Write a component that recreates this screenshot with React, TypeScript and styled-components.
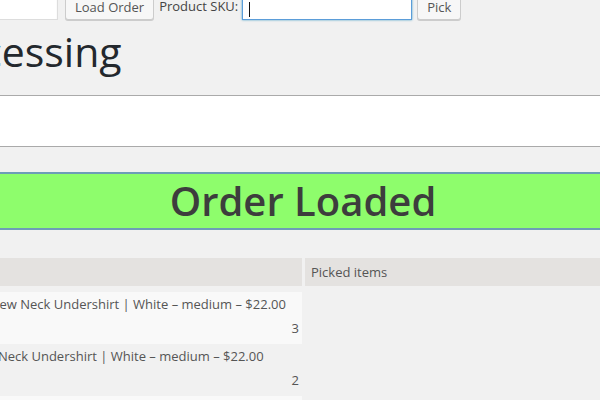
import styled, { createGlobalStyle } from 'styled-components';

const GlobalStyle = createGlobalStyle`
  html, body {
    margin: 0;
    padding: 0;
    background: #f1f1f1;
    overflow: hidden;
  }
  body {
    font-family: "Open Sans", "Noto Sans", sans-serif;
    font-size: 13px;
    color: #444;
  }
`;

const Wrap = styled.div`
  margin-left: -84px;
  width: 774px;
`;

const Toolbar = styled.form`
  display: flex;
  align-items: center;
  margin-top: -8px;
  height: 28px;
`;

const TextInput = styled.input<{ $width: number; $focused?: boolean }>`
  box-sizing: border-box;
  width: ${({ $width }) => $width}px;
  height: 28px;
  margin: 0;
  padding: 0 6px;
  background: #fff;
  border: 1px solid ${({ $focused }) => ($focused ? '#5b9dd9' : '#ddd')};
  box-shadow: ${({ $focused }) =>
    $focused ? '0 0 2px rgba(30, 140, 190, 0.8)' : 'inset 0 1px 2px rgba(0,0,0,.07)'};
  font: inherit;
  color: #32373c;
  outline: none;
  caret-color: transparent;
`;

const FieldBox = styled.div`
  position: relative;
  display: flex;
`;

const Caret = styled.span`
  position: absolute;
  left: 7px;
  top: 10px;
  width: 1px;
  height: 15px;
  background: #111;
`;

const Button = styled.button<{ $gapLeft: number }>`
  box-sizing: border-box;
  height: 28px;
  margin: 0 0 0 ${({ $gapLeft }) => $gapLeft}px;
  padding: 1px 9px 0;
  background: #f7f7f7;
  border: 1px solid #ccc;
  border-radius: 3px;
  box-shadow: 0 1px 0 #ccc;
  color: #555;
  font: inherit;
  line-height: 26px;
  white-space: nowrap;
`;

const Label = styled.label`
  margin: 0 4px 0 5px;
  color: #444;
  white-space: nowrap;
`;

const Title = styled.h1`
  margin: 5px 0 18px;
  font-size: 41px;
  font-weight: 400;
  line-height: 52px;
  color: #23282d;
  white-space: nowrap;
`;

const ScanBox = styled.div`
  height: 50px;
  background: #fff;
  border-top: 1px solid #aaa;
  border-bottom: 1px solid #aaa;
`;

const Notice = styled.div`
  margin-top: 25px;
  height: 54px;
  background: #8efd6c;
  border-top: 2px solid #6d9db7;
  border-bottom: 2px solid #6d9db7;
  color: #3d3d3d;
  font-size: 40px;
  font-weight: 600;
  line-height: 54px;
  text-align: center;
`;

const Columns = styled.div`
  display: grid;
  grid-template-columns: 386px 1fr;
  column-gap: 3px;
  margin-top: 28px;
`;

const Column = styled.div`
  display: flex;
  flex-direction: column;
`;

const HeadCell = styled.div`
  height: 28px;
  padding: 0 6px;
  background: #e4e2e0;
  color: #555;
  line-height: 28px;
  margin-bottom: 6px;
`;

const ItemRow = styled.div<{ $alt: boolean }>`
  height: 52px;
  box-sizing: border-box;
  padding: 0 3px 4px 70px;
  background: ${({ $alt }) => ($alt ? '#f9f9f9' : 'transparent')};
  color: #555;
  line-height: 24px;
  white-space: nowrap;
`;

const Qty = styled.div`
  text-align: right;
`;

const items = [
  { name: 'Crew Neck Undershirt | White – medium – $22.00', qty: 3 },
  { name: 'V-Neck Undershirt | White – medium – $22.00', qty: 2 },
  { name: 'Crew Neck Undershirt | Black – large – $22.00', qty: 1 },
];

export default function App() {
  return (
    <>
      <GlobalStyle />
      <Wrap>
        <Toolbar onSubmit={(e) => e.preventDefault()}>
          <TextInput $width={142} defaultValue="" />
          <Button $gapLeft={7} type="button">
            Load Order
          </Button>
          <Label>Product SKU:</Label>
          <FieldBox>
            <TextInput $width={170} $focused />
            <Caret />
          </FieldBox>
          <Button $gapLeft={5} type="button">
            Pick
          </Button>
        </Toolbar>
        <Title>Processing</Title>
        <ScanBox />
        <Notice>Order Loaded</Notice>
        <Columns>
          <Column>
            <HeadCell>Items to pick</HeadCell>
            {items.map((item, i) => (
              <ItemRow key={i} $alt={i % 2 === 0}>
                <div>{item.name}</div>
                <Qty>{item.qty}</Qty>
              </ItemRow>
            ))}
          </Column>
          <Column>
            <HeadCell>Picked items</HeadCell>
          </Column>
        </Columns>
      </Wrap>
    </>
  );
}
